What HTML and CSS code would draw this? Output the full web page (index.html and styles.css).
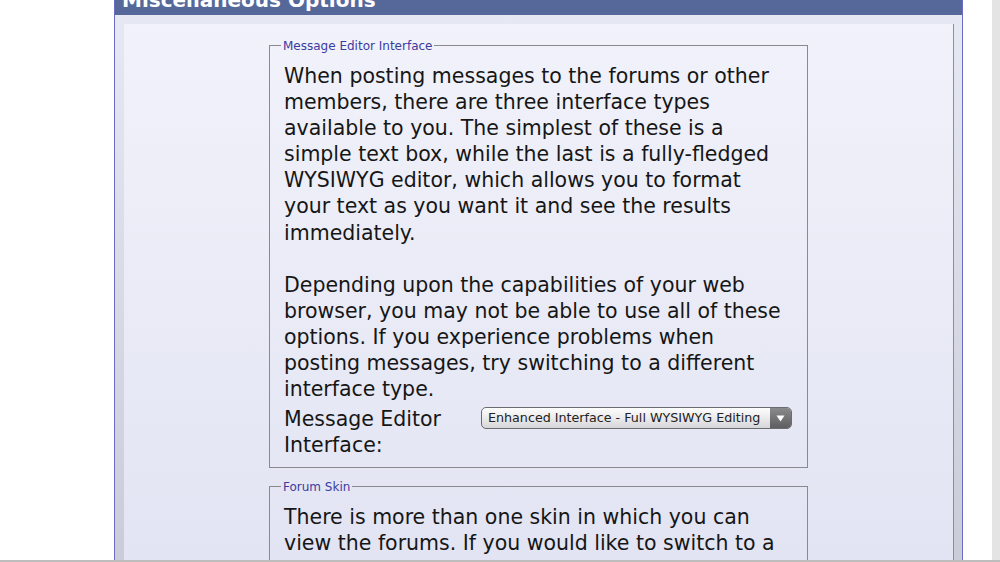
FILE: index.html
```html
<!DOCTYPE html>
<html>
<head>
<meta charset="utf-8">
<title>Miscellaneous Options</title>
<link rel="stylesheet" href="styles.css">
</head>
<body>
<div class="page">
  <div class="panel">
    <div class="panel-head">Miscellaneous Options</div>
    <div class="panel-body">
      <div class="panel-inner">
        <fieldset class="group">
          <legend>Message Editor Interface</legend>
          <div class="desc">When posting messages to the forums or other members, there are three interface types available to you. The simplest of these is a simple text box, while the last is a fully-fledged WYSIWYG editor, which allows you to format your text as you want it and see the results immediately.<br><br>Depending upon the capabilities of your web browser, you may not be able to use all of these options. If you experience problems when posting messages, try switching to a different interface type.</div>
          <div class="row">
            <div class="label">Message Editor Interface:</div>
            <div class="select">
              <span class="select-text">Enhanced Interface - Full WYSIWYG Editing</span>
              <span class="select-arrow"><svg width="9" height="7" viewBox="0 0 9 7"><path d="M0.5 0.5 L8.5 0.5 L4.5 6.5 Z" fill="#ffffff"/></svg></span>
            </div>
          </div>
        </fieldset>
        <fieldset class="group">
          <legend>Forum Skin</legend>
          <div class="desc">There is more than one skin in which you can view the forums. If you would like to switch to a different skin, select it from this list.</div>
          <div class="row">
            <div class="label">Forum Skin:</div>
            <div class="select">
              <span class="select-text">Default Style</span>
              <span class="select-arrow"><svg width="9" height="7" viewBox="0 0 9 7"><path d="M0.5 0.5 L8.5 0.5 L4.5 6.5 Z" fill="#ffffff"/></svg></span>
            </div>
          </div>
        </fieldset>
      </div>
    </div>
  </div>
  <div class="scroll-strip"></div>
</div>
<div class="window-edge"></div>
</body>
</html>
```

FILE: styles.css
```css
html, body {
  margin: 0;
  padding: 0;
  overflow: hidden;
  background: #ffffff;
}
body {
  font-family: "DejaVu Sans", Verdana, sans-serif;
  color: #161616;
}
.page {
  display: flex;
  align-items: stretch;
  min-height: 562px;
}
.panel {
  margin-top: -16px;
  margin-left: 114px;
  width: 847px;
  flex: none;
  border-left: 1px solid #6a6cc4;
  border-right: 1px solid #6a6cc4;
  margin-right: 29px;
}
.panel-head {
  background: #56689a;
  color: #ffffff;
  font-weight: bold;
  font-size: 20px;
  line-height: 24px;
  padding: 4px 7px 3px;
}
.panel-body {
  padding: 9px 8px 0 9px;
  background: linear-gradient(#e6e8f4, #c9cbd6 560px);
}
.panel-inner {
  background: linear-gradient(#f1f2fa, #e2e4f3 540px);
  border-right: 1px solid #8e8e96;
  padding: 13px 0 30px;
}
.group {
  box-sizing: border-box;
  width: 539px;
  min-width: 0;
  margin: 0 auto 10px;
  padding: 10px 22px 9px 14px;
  border: 1px solid #8a8a8e;
}
.group legend {
  font-size: 12px;
  line-height: 14px;
  color: #3b3ba0;
  padding: 2px 2px 0;
  margin-left: -3px;
}
.desc {
  font-size: 20.5px;
  line-height: 26.1px;
}
.row {
  display: grid;
  grid-template-columns: 197px 311px;
  margin-top: 4px;
  align-items: start;
}
.label {
  font-size: 20.5px;
  line-height: 26px;
}
.select {
  margin-top: 1px;
  height: 20px;
  border: 1px solid #6c6c70;
  border-radius: 5px;
  background: linear-gradient(#fdfdfd, #e9e9ea 55%, #d6d6d8);
  display: flex;
  align-items: stretch;
  overflow: hidden;
}
.select-text {
  flex: 1;
  font-size: 12.7px;
  line-height: 20px;
  padding-left: 6px;
  color: #222;
  white-space: nowrap;
}
.select-arrow {
  width: 21px;
  background: linear-gradient(#8a8a8c, #5e5e60);
  display: flex;
  align-items: center;
  justify-content: center;
}
.scroll-strip {
  width: 8px;
  flex: none;
  background: #e4e4e4;
}
.window-edge {
  position: fixed;
  left: 0;
  right: 0;
  bottom: 0;
  height: 2px;
  background: #bdbdbd;
}
```
